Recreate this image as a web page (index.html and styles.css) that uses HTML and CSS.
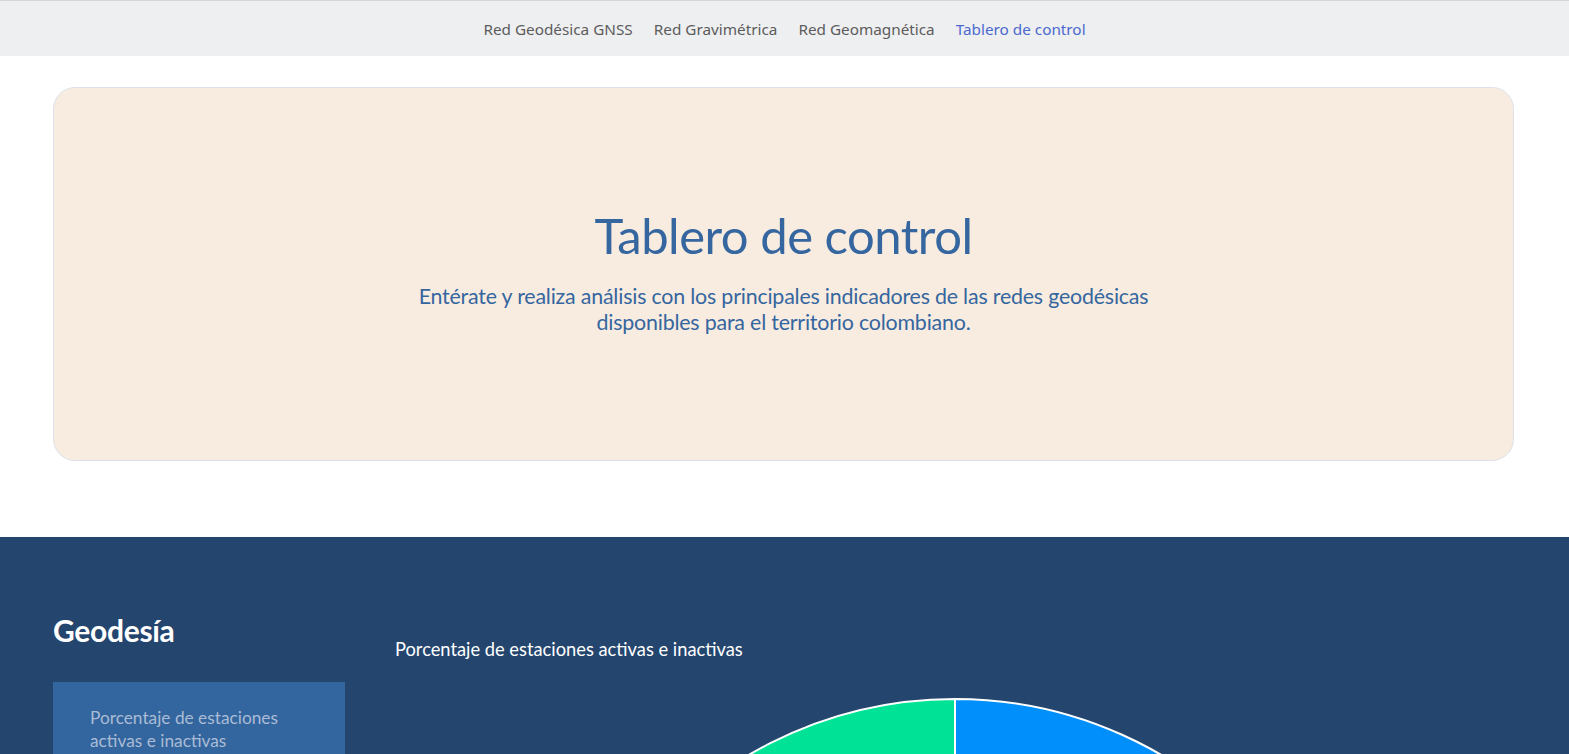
FILE: index.html
```html
<!DOCTYPE html>
<html lang="es">
<head>
<meta charset="utf-8">
<title>Tablero de control</title>
<link rel="stylesheet" href="styles.css">
</head>
<body>
<nav class="topnav">
  <a class="nav-link" href="#">Red Geodésica GNSS</a>
  <a class="nav-link" href="#">Red Gravimétrica</a>
  <a class="nav-link" href="#">Red Geomagnética</a>
  <a class="nav-link active" href="#">Tablero de control</a>
</nav>

<section class="hero-wrap">
  <div class="hero">
    <h1 class="hero-title">Tablero de control</h1>
    <p class="hero-text">Entérate y realiza análisis con los principales indicadores de las redes geodésicas<br>disponibles para el territorio colombiano.</p>
  </div>
</section>

<section class="dash">
  <div class="dash-inner">
    <aside class="side">
      <h2 class="side-title">Geodesía</h2>
      <div class="side-menu">
        <a class="side-item" href="#">Porcentaje de estaciones activas e inactivas</a>
      </div>
    </aside>
    <div class="chart-col">
      <h3 class="chart-title">Porcentaje de estaciones activas e inactivas</h3>
      <div class="chart">
        <svg class="pie" width="820" height="820" viewBox="0 0 820 820">
          <path d="M410 410 L410 2 A408 408 0 1 1 79.9 170.2 Z" fill="#008ffb" stroke="#ffffff" stroke-width="2"/>
          <path d="M410 410 L79.9 170.2 A408 408 0 0 1 410 2 Z" fill="#00e396" stroke="#ffffff" stroke-width="2"/>
        </svg>
      </div>
    </div>
  </div>
</section>
</body>
</html>
```

FILE: styles.css
```css
html, body {
  margin: 0;
  padding: 0;
  background: #ffffff;
}

body {
  font-family: "Lato", "Open Sans", sans-serif;
}

.topnav {
  display: flex;
  justify-content: center;
  align-items: center;
  height: 55px;
  background: #eeeff1;
  border-top: 1px solid #d4d6d9;
}

.nav-link {
  font-family: "Noto Sans", "Open Sans", sans-serif;
  font-size: 15.3px;
  color: #5c5c5c;
  text-decoration: none;
  padding: 0 10.5px;
}

.nav-link.active {
  color: #4c69cf;
}

.hero-wrap {
  padding: 31px 55px 76px 53px;
}

.hero {
  box-sizing: border-box;
  height: 374px;
  background: #f8ece0;
  border: 1px solid #dde2ea;
  border-radius: 22px;
  display: flex;
  flex-direction: column;
  align-items: center;
  justify-content: center;
  text-align: center;
  color: #35669f;
}

.hero-title {
  font-weight: 400;
  font-size: 49px;
  letter-spacing: -0.5px;
  margin: -6px 0 0;
  line-height: 56px;
  padding-bottom: 20px;
}

.hero-text {
  font-size: 21.4px;
  line-height: 26px;
  margin: 0;
  letter-spacing: -0.2px;
}

.dash {
  background: #24456e;
  padding: 74px 55px 0 53px;
  min-height: 900px;
}

.dash-inner {
  display: flex;
  gap: 50px;
}

.side {
  width: 292px;
  flex: none;
}

.side-title {
  margin: 0;
  color: #ffffff;
  font-size: 30px;
  font-weight: 700;
  line-height: 38px;
  letter-spacing: -0.3px;
}

.side-menu {
  margin-top: 33px;
  background: #33659e;
  padding: 24px 20px 20px 37px;
}

.side-item {
  display: block;
  color: #aabcd5;
  text-decoration: none;
  font-size: 17.3px;
  line-height: 23px;
}

.chart-col {
  flex: 1;
  padding-top: 26px;
}

.chart-title {
  margin: 0;
  color: #ffffff;
  font-size: 18.3px;
  font-weight: 400;
  line-height: 24px;
}

.chart {
  display: flex;
  justify-content: center;
  margin-top: 36px;
}

.pie {
  display: block;
}
```
